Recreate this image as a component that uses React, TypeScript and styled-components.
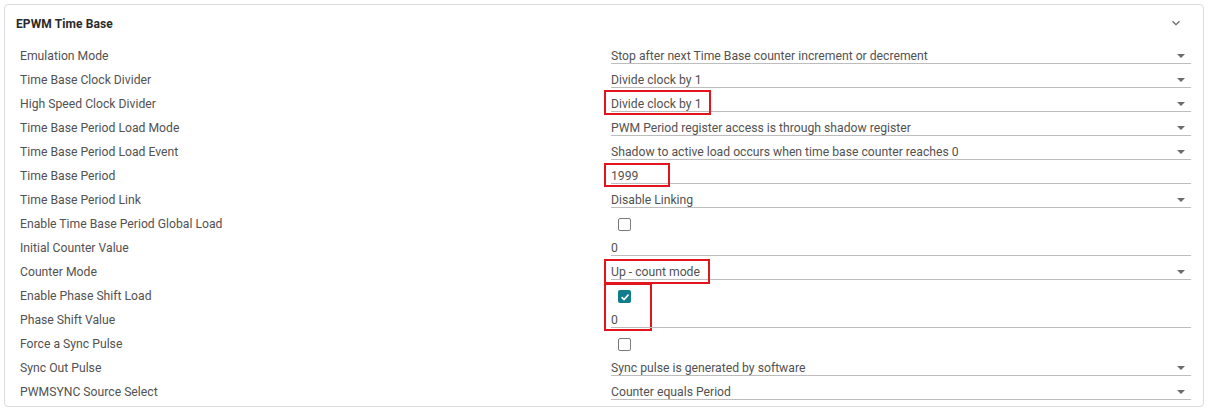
import React from "react";
import styled, { createGlobalStyle } from "styled-components";

const Global = createGlobalStyle`
  html, body { margin: 0; padding: 0; background: #ffffff; }
  body { font-family: Roboto, "Liberation Sans", Arial, sans-serif; }
  * { box-sizing: border-box; }
`;

const Card = styled.section`
  margin: 4px;
  width: 1200px;
  height: 403px;
  border: 1px solid #dcdcdc;
  border-radius: 4px;
  background: #fff;
  padding: 0 12px 0 11px;
`;

const Header = styled.header`
  height: 39px;
  display: flex;
  align-items: center;
  justify-content: space-between;
  padding-bottom: 1px;
`;

const Title = styled.h2`
  margin: 0;
  font-size: 12px;
  font-weight: 700;
  color: #2a2a2a;
  letter-spacing: 0.1px;
`;

const Chevron = styled.svg`
  width: 10px;
  height: 10px;
  margin-right: 10px;
  margin-top: -3px;
`;

const Rows = styled.div`
  display: flex;
  flex-direction: column;
`;

const Row = styled.div`
  display: grid;
  grid-template-columns: 595px 1fr;
  height: 24px;
`;

const Label = styled.div`
  padding-left: 4px;
  font-size: 12.2px;
  line-height: 24px;
  color: #525252;
`;

const Cell = styled.div`
  position: relative;
`;

const Field = styled.div`
  position: relative;
  margin-top: 4px;
  height: 16px;
  border-bottom: 1.5px solid #bdbdbd;
  font-size: 12.2px;
  line-height: 16px;
  color: #525252;
`;

const Arrow = styled.span`
  position: absolute;
  right: 6px;
  top: 6px;
  width: 0;
  height: 0;
  border-left: 4px solid transparent;
  border-right: 4px solid transparent;
  border-top: 4px solid #6b6b6b;
`;

const Box = styled.span<{ $checked?: boolean }>`
  margin: 6px 0 0 7px;
  width: 13px;
  height: 13px;
  border-radius: 2px;
  border: ${(p) => (p.$checked ? "none" : "1.5px solid #7a7a7a")};
  background: ${(p) => (p.$checked ? "#0f7d8c" : "#fff")};
  display: flex;
  align-items: center;
  justify-content: center;
`;

const Highlight = styled.span<{ $w: number; $h: number; $top: number }>`
  position: absolute;
  left: -7px;
  top: ${(p) => p.$top}px;
  width: ${(p) => p.$w}px;
  height: ${(p) => p.$h}px;
  border: 2px solid #e3141c;
  pointer-events: none;
`;

type Item = {
  label: string;
  kind: "select" | "text" | "check";
  value?: string;
  checked?: boolean;
  mark?: { w: number; h: number; top: number };
};

const items: Item[] = [
  { label: "Emulation Mode", kind: "select", value: "Stop after next Time Base counter increment or decrement" },
  { label: "Time Base Clock Divider", kind: "select", value: "Divide clock by 1" },
  { label: "High Speed Clock Divider", kind: "select", value: "Divide clock by 1", mark: { w: 107, h: 25, top: -2 } },
  { label: "Time Base Period Load Mode", kind: "select", value: "PWM Period register access is through shadow register" },
  { label: "Time Base Period Load Event", kind: "select", value: "Shadow to active load occurs when time base counter reaches 0" },
  { label: "Time Base Period", kind: "text", value: "1999", mark: { w: 66, h: 24, top: -1 } },
  { label: "Time Base Period Link", kind: "select", value: "Disable Linking" },
  { label: "Enable Time Base Period Global Load", kind: "check", checked: false },
  { label: "Initial Counter Value", kind: "text", value: "0" },
  { label: "Counter Mode", kind: "select", value: "Up - count mode", mark: { w: 106, h: 25, top: -1 } },
  { label: "Enable Phase Shift Load", kind: "check", checked: true, mark: { w: 48, h: 48, top: -1 } },
  { label: "Phase Shift Value", kind: "text", value: "0" },
  { label: "Force a Sync Pulse", kind: "check", checked: false },
  { label: "Sync Out Pulse", kind: "select", value: "Sync pulse is generated by software" },
  { label: "PWMSYNC Source Select", kind: "select", value: "Counter equals Period" },
];

const Check = () => (
  <svg width="10" height="10" viewBox="0 0 10 10">
    <path d="M1.6 5.2 L4 7.5 L8.5 2.6" fill="none" stroke="#fff" strokeWidth="1.6" />
  </svg>
);

export default function App() {
  return (
    <>
      <Global />
      <Card>
        <Header>
          <Title>EPWM Time Base</Title>
          <Chevron viewBox="0 0 10 10">
            <path d="M1.5 3.2 L5 6.6 L8.5 3.2" fill="none" stroke="#666" strokeWidth="1.2" />
          </Chevron>
        </Header>
        <Rows>
          {items.map((it) => (
            <Row key={it.label}>
              <Label>{it.label}</Label>
              <Cell>
                {it.kind === "check" ? (
                  <Box $checked={it.checked}>{it.checked && <Check />}</Box>
                ) : (
                  <Field>
                    {it.value}
                    {it.kind === "select" && <Arrow />}
                  </Field>
                )}
                {it.mark && <Highlight $w={it.mark.w} $h={it.mark.h} $top={it.mark.top} />}
              </Cell>
            </Row>
          ))}
        </Rows>
      </Card>
    </>
  );
}
